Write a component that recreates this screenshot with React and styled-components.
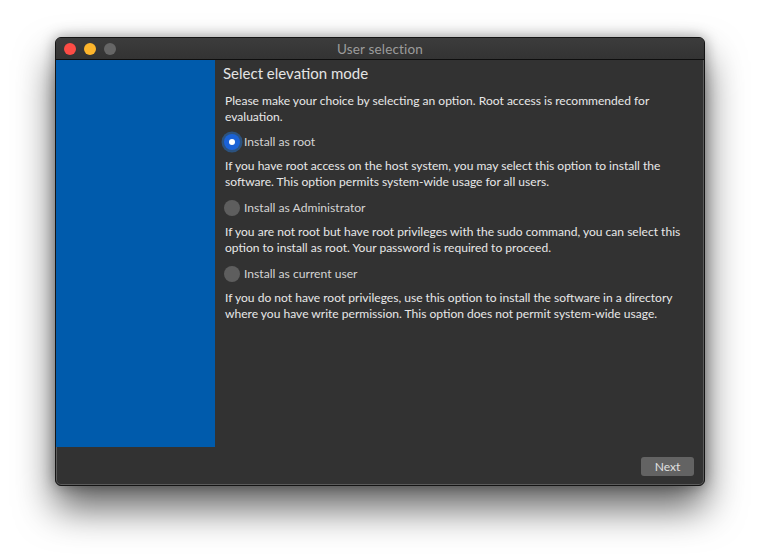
import React from "react";
import styled, { createGlobalStyle } from "styled-components";

const GlobalStyle = createGlobalStyle`
  html, body {
    margin: 0;
    background: #fff;
  }
  body {
    font-family: Lato, "Noto Sans", sans-serif;
  }
`;

const Page = styled.div`
  width: 760px;
  height: 559px;
  box-sizing: border-box;
  padding: 37px 55px 0;
  overflow: hidden;
  background: #fff;
`;

const Window = styled.div`
  width: 650px;
  height: 449px;
  box-sizing: border-box;
  display: flex;
  flex-direction: column;
  background: #323232;
  border: 1px solid #141414;
  border-radius: 6px;
  box-shadow: inset 0 0 0 1px #5c5c5c, 0 22px 38px rgba(0, 0, 0, 0.62), 0 0 14px rgba(0, 0, 0, 0.35);
  overflow: hidden;
`;

const TitleBar = styled.div`
  position: relative;
  flex: none;
  height: 21px;
  display: flex;
  align-items: center;
  justify-content: center;
  background: linear-gradient(#3c3c3c, #333);
  border-bottom: 1px solid #0e0e0e;
`;

const Lights = styled.div`
  position: absolute;
  left: 8px;
  top: 5px;
  display: flex;
  gap: 8px;
`;

const Light = styled.span`
  width: 12px;
  height: 12px;
  border-radius: 50%;
  background: ${(p) => p.$color};
`;

const Title = styled.span`
  font-size: 13.5px;
  letter-spacing: 0.17px;
  color: #9c9c9c;
`;

const Main = styled.div`
  flex: 1;
  display: flex;
  min-height: 0;
`;

const Sidebar = styled.div`
  flex: none;
  width: 159px;
  background: #005bac;
`;

const Content = styled.div`
  flex: 1;
  padding: 4px 10px 0 8px;
`;

const Heading = styled.h1`
  margin: 0 0 10px;
  font-size: 15px;
  line-height: 19px;
  font-weight: 400;
  color: #e4e4e4;
`;

const Text = styled.p`
  margin: 0 0 0 2px;
  font-size: 12.05px;
  line-height: 16px;
  color: #e8e8e8;
`;

const Option = styled.label`
  display: flex;
  align-items: center;
  gap: 4px;
  height: 20px;
  margin: ${(p) => (p.$first ? "7px" : "8px")} 0 6px 1px;
  font-size: 12.15px;
  color: #d4d4d4;
`;

const OptionLabel = styled.span`
  margin-bottom: 2px;
`;

const Radio = styled.span`
  flex: none;
  width: 16px;
  height: 16px;
  border-radius: 50%;
  display: flex;
  align-items: center;
  justify-content: center;
  background: ${(p) => (p.$checked ? "#1b62d6" : "#5e5e5e")};
  box-shadow: ${(p) => (p.$checked ? "0 0 0 2.5px rgba(40, 110, 190, 0.55)" : "none")};

  &::after {
    content: "";
    display: ${(p) => (p.$checked ? "block" : "none")};
    width: 6px;
    height: 6px;
    border-radius: 50%;
    background: #fff;
  }
`;

const Footer = styled.div`
  flex: none;
  height: 38px;
  display: flex;
  justify-content: flex-end;
  align-items: flex-start;
  padding: 10px 10px 0 0;
  box-sizing: border-box;
`;

const NextButton = styled.button`
  width: 53px;
  height: 19px;
  padding: 0;
  border: 0;
  border-radius: 3px;
  background: #636363;
  color: #e0e0e0;
  font: 400 12.1px Lato, "Noto Sans", sans-serif;
`;

const options = [
  {
    label: "Install as root",
    checked: true,
    text: "If you have root access on the host system, you may select this option to install the software. This option permits system-wide usage for all users.",
  },
  {
    label: "Install as Administrator",
    text: "If you are not root but have root privileges with the sudo command, you can select this option to install as root. Your password is required to proceed.",
  },
  {
    label: "Install as current user",
    text: "If you do not have root privileges, use this option to install the software in a directory where you have write permission. This option does not permit system-wide usage.",
  },
];

export default function App() {
  return (
    <Page>
      <GlobalStyle />
      <Window>
        <TitleBar>
          <Lights>
            <Light $color="#fc4c45" />
            <Light $color="#fdb52c" />
            <Light $color="#666" />
          </Lights>
          <Title>User selection</Title>
        </TitleBar>
        <Main>
          <Sidebar />
          <Content>
            <Heading>Select elevation mode</Heading>
            <Text>
              Please make your choice by selecting an option. Root access is recommended for evaluation.
            </Text>
            {options.map((o, i) => (
              <React.Fragment key={o.label}>
                <Option $first={i === 0}>
                  <Radio $checked={o.checked} />
                  <OptionLabel>{o.label}</OptionLabel>
                </Option>
                <Text>{o.text}</Text>
              </React.Fragment>
            ))}
          </Content>
        </Main>
        <Footer>
          <NextButton>Next</NextButton>
        </Footer>
      </Window>
    </Page>
  );
}
